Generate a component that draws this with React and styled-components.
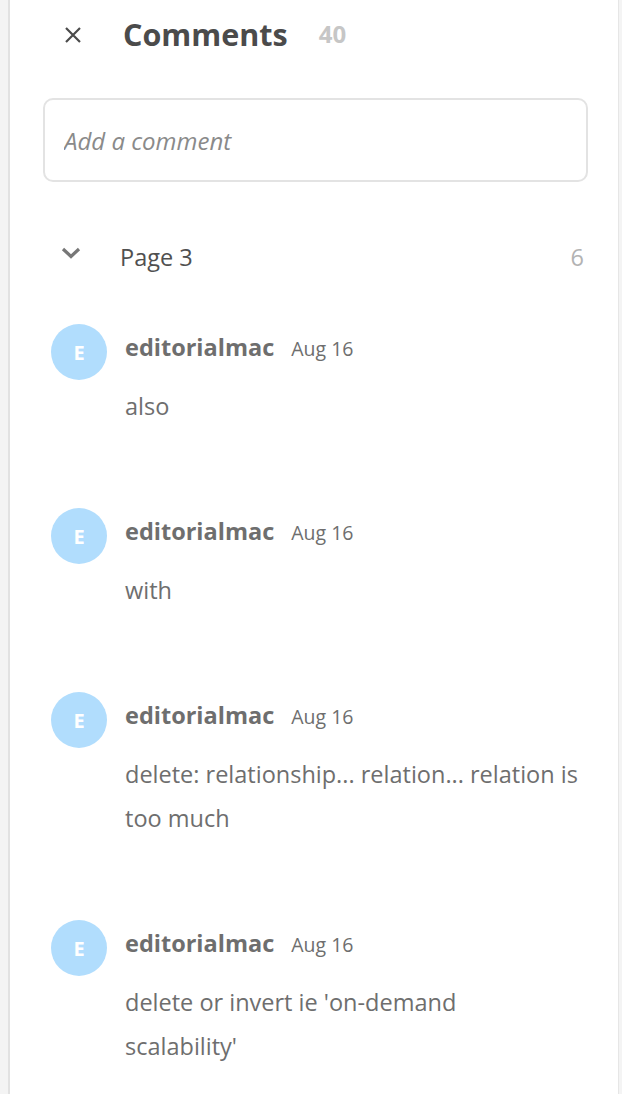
import React from 'react';
import styled, { createGlobalStyle } from 'styled-components';

const GlobalStyle = createGlobalStyle`
    html, body {
        margin: 0;
        padding: 0;
        background: #f4f4f4;
    }
    body {
        font-family: "Open Sans", "Noto Sans", sans-serif;
    }
`

const Panel = styled('aside')`
    margin-left: 8px;
    width: 611px;
    min-height: 100vh;
    box-sizing: border-box;
    background: #fff;
    border-left: 2px solid #e2e2e2;
    border-right: 1px solid #e6e6e6;
    padding: 0 30px 40px 33px;
`

const Header = styled('header')`
    display: flex;
    align-items: center;
    height: 68px;
    padding-left: 21px;
    .title{
        margin: 0 0 0 41px;
        font-size: 30.5px;
        font-weight: 700;
        color: #4b4b4b;
        line-height: 1;
    }
    .count{
        margin-left: 31px;
        font-size: 24px;
        font-weight: 700;
        color: #c6c6c6;
        line-height: 1;
    }
`

const CloseButton = styled('button')`
    display: flex;
    width: 18px;
    height: 18px;
    padding: 0;
    border: none;
    background: none;
    color: #4b4b4b;
    margin-top: 1px;
`

const CommentInput = styled('input')`
    display: block;
    width: 100%;
    height: 84px;
    box-sizing: border-box;
    margin-top: 30px;
    border: 2px solid #e3e3e3;
    border-radius: 10px;
    padding: 0 19px;
    font-family: inherit;
    font-size: 24px;
    color: #4b4b4b;
    outline: none;
    &::placeholder{
        font-style: italic;
        color: #8a8a8a;
    }
`

const PageRow = styled('div')`
    display: flex;
    align-items: center;
    height: 48px;
    margin-top: 52px;
    padding: 0 4px 0 18px;
    .chevron{
        display: flex;
        color: #777;
        margin-bottom: 11px;
    }
    .label{
        margin-left: 39px;
        font-size: 23.5px;
        color: #505050;
        line-height: 1;
    }
    .num{
        margin-left: auto;
        font-size: 23.5px;
        color: #b3b3b3;
        line-height: 1;
    }
`

const CommentList = styled('ul')`
    list-style: none;
    margin: 42px 0 0;
    padding: 0 0 0 8px;
    display: flex;
    flex-direction: column;
    gap: 80px;
`

const CommentItem = styled('li')`
    display: grid;
    grid-template-columns: 56px 1fr;
    column-gap: 18px;
    row-gap: 4px;
`

const Avatar = styled('div')`
    width: 56px;
    height: 56px;
    border-radius: 50%;
    background: ${props => props.color || '#b1ddfd'};
    color: #fff;
    display: flex;
    align-items: center;
    justify-content: center;
    font-size: 20px;
    font-weight: 700;
`

const Meta = styled('div')`
    display: flex;
    align-items: center;
    height: 56px;
    padding-bottom: 8px;
    box-sizing: border-box;
    color: #6e6e6e;
    .name{
        font-size: 23.5px;
        font-weight: 700;
        line-height: 1;
    }
    .date{
        margin-left: 17px;
        font-size: 19.5px;
        line-height: 1;
        padding-top: 2px;
    }
`

const Body = styled('p')`
    grid-column: 2;
    margin: 0;
    font-size: 23.5px;
    line-height: 44px;
    color: #6e6e6e;
    white-space: pre-line;
`

const comments = [
    { user: 'editorialmac', date: 'Aug 16', text: 'also' },
    { user: 'editorialmac', date: 'Aug 16', text: 'with' },
    { user: 'editorialmac', date: 'Aug 16', text: 'delete: relationship... relation... relation is\ntoo much' },
    { user: 'editorialmac', date: 'Aug 16', text: "delete or invert ie 'on-demand\nscalability'" },
]

const App = () => {
    return(
        <>
            <GlobalStyle />
            <Panel>
                <Header>
                    <CloseButton aria-label="Close">
                        <svg width="18" height="18" viewBox="0 0 18 18">
                            <path d="M2 2 L16 16 M16 2 L2 16" stroke="currentColor" strokeWidth="2.2" fill="none" />
                        </svg>
                    </CloseButton>
                    <h2 className='title'>Comments</h2>
                    <span className='count'>40</span>
                </Header>
                <CommentInput placeholder="Add a comment" />
                <PageRow>
                    <span className='chevron'>
                        <svg width="20" height="12" viewBox="0 0 20 12">
                            <path d="M2 2 L10 9.5 L18 2" stroke="currentColor" strokeWidth="3.2" fill="none" strokeLinejoin="miter" />
                        </svg>
                    </span>
                    <span className='label'>Page 3</span>
                    <span className='num'>6</span>
                </PageRow>
                <CommentList>
                    {comments.map((c, i) => (
                        <CommentItem key={i}>
                            <Avatar>{c.user[0].toUpperCase()}</Avatar>
                            <Meta>
                                <span className='name'>{c.user}</span>
                                <span className='date'>{c.date}</span>
                            </Meta>
                            <Body>{c.text}</Body>
                        </CommentItem>
                    ))}
                </CommentList>
            </Panel>
        </>
    )
}

export default App
